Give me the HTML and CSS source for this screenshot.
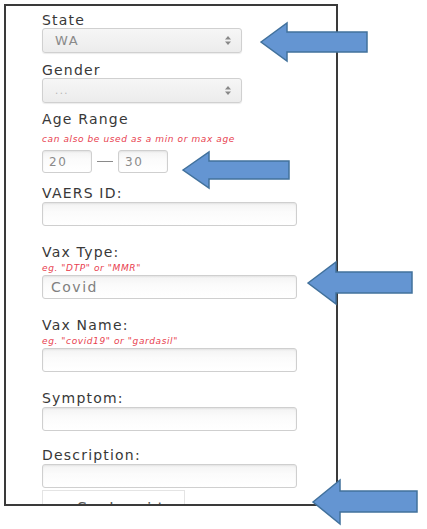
FILE: index.html
```html
<!DOCTYPE html>
<html lang="en">
<head>
    <meta charset="UTF-8">
    <meta name="viewport" content="width=device-width, initial-scale=1.0">
    <title>VAERS search</title>
    <link rel="stylesheet" href="styles.css">
</head>
<body>

    <!-- Search form (cropped) -->
    <div class="frame">
        <div class="field">
            <label>State</label>
            <div class="select">WA
                <svg class="caret" width="6" height="9" viewBox="0 0 6 9"><path d="M3 0L6 3.5H0Z M3 9L6 5.5H0Z" fill="#888"/></svg>
            </div>
        </div>

        <div class="field field-gender">
            <label>Gender</label>
            <div class="select muted">...
                <svg class="caret" width="6" height="9" viewBox="0 0 6 9"><path d="M3 0L6 3.5H0Z M3 9L6 5.5H0Z" fill="#888"/></svg>
            </div>
        </div>

        <div class="field field-age">
            <label>Age Range</label>
            <p class="hint hint-age">can also be used as a min or max age</p>
            <div class="range">
                <div class="input small">20</div>
                <span class="dash"></span>
                <div class="input small">30</div>
            </div>
        </div>

        <div class="field field-id">
            <label>VAERS ID:</label>
            <div class="input"></div>
        </div>

        <div class="field field-text">
            <label>Vax Type:</label>
            <p class="hint">eg. "DTP" or "MMR"</p>
            <div class="input">Covid</div>
        </div>

        <div class="field field-text">
            <label>Vax Name:</label>
            <p class="hint">eg. "covid19" or "gardasil"</p>
            <div class="input"></div>
        </div>

        <div class="field field-text">
            <label>Symptom:</label>
            <div class="input"></div>
        </div>

        <div class="field field-desc">
            <label>Description:</label>
            <div class="input"></div>
        </div>

        <div class="submit">Submit</div>
    </div>

    <!-- Callout arrows -->
    <svg class="arrows" width="427" height="529" viewBox="0 0 427 529">
        <g fill="#6495d2" stroke="#41719c" stroke-width="1.5" stroke-linejoin="miter">
            <polygon points="261,42 287,23 287,32 367,32 367,52 287,52 287,61"/>
            <polygon points="183,170 209,152 209,161 289,161 289,179 209,179 209,188"/>
            <polygon points="308,283 336,262 336,272 412,272 412,293 336,293 336,304"/>
            <polygon points="313,502 340,480 340,491 417,491 417,512 340,512 340,524"/>
        </g>
    </svg>

</body>
</html>
```

FILE: styles.css
```css
body {
    margin: 0;
    background: #fff;
    font-family: "DejaVu Sans", sans-serif;
    color: #3a3a3a;
}

.frame {
    box-sizing: border-box;
    width: 334px;
    height: 502px;
    margin: 4px;
    border: 2px solid #3a3a3a;
    padding: 6px 0 0 36px;
    overflow: hidden;
}

.field {
    display: flex;
    flex-direction: column;
    align-items: flex-start;
}

label {
    display: block;
    font-size: 14px;
    line-height: 16px;
    letter-spacing: 1.2px;
    color: #383838;
}

.field-gender {
    margin-top: 9px;
}

.field-age {
    margin-top: 8px;
}

.field-id {
    margin-top: 12px;
}

.field-text {
    margin-top: 18px;
}

.field-desc {
    margin-top: 16px;
}

.hint {
    margin: 2px 0 0;
    font-size: 9px;
    line-height: 12px;
    font-style: italic;
    letter-spacing: 0.6px;
    color: #e8414f;
}

.hint-age {
    margin-top: 6px;
}

.select {
    box-sizing: border-box;
    width: 200px;
    height: 25px;
    display: flex;
    align-items: center;
    justify-content: space-between;
    padding: 0 10px 0 12px;
    border: 1px solid #d0d0d0;
    border-radius: 3px;
    background: linear-gradient(#f6f6f6, #ececec);
    box-shadow: 0 1px 1px rgba(0, 0, 0, 0.08);
    font-size: 13px;
    letter-spacing: 1.5px;
    color: #8a8a8a;
}

.select.muted {
    color: #b5b5b5;
    font-size: 10px;
}

.input {
    box-sizing: border-box;
    width: 255px;
    height: 24px;
    margin-top: 1px;
    display: flex;
    align-items: center;
    padding: 0 8px;
    border: 1px solid #cfcfcf;
    border-radius: 3px;
    background: linear-gradient(#f3f3f3, #fbfbfb 40%, #fff);
    box-shadow: inset 0 1px 2px rgba(0, 0, 0, 0.07);
    font-size: 14px;
    letter-spacing: 1.5px;
    color: #808080;
}

.range {
    display: flex;
    align-items: center;
    margin-top: 5px;
}

.input.small {
    width: 50px;
    height: 23px;
    margin-top: 0;
    padding: 0 6px;
    font-size: 12px;
    color: #8a8a8a;
}

.dash {
    width: 16px;
    height: 1px;
    margin: 0 5px;
    background: #8a8a8a;
}

.submit {
    box-sizing: border-box;
    width: 143px;
    height: 40px;
    margin-top: 2px;
    padding: 8px 0 0 34px;
    border: 1px solid #e4e4e4;
    border-bottom: none;
    font-size: 16px;
    line-height: 20px;
    letter-spacing: 6px;
    color: #555;
}

.arrows {
    position: absolute;
    left: 0;
    top: 0;
    pointer-events: none;
}
```
